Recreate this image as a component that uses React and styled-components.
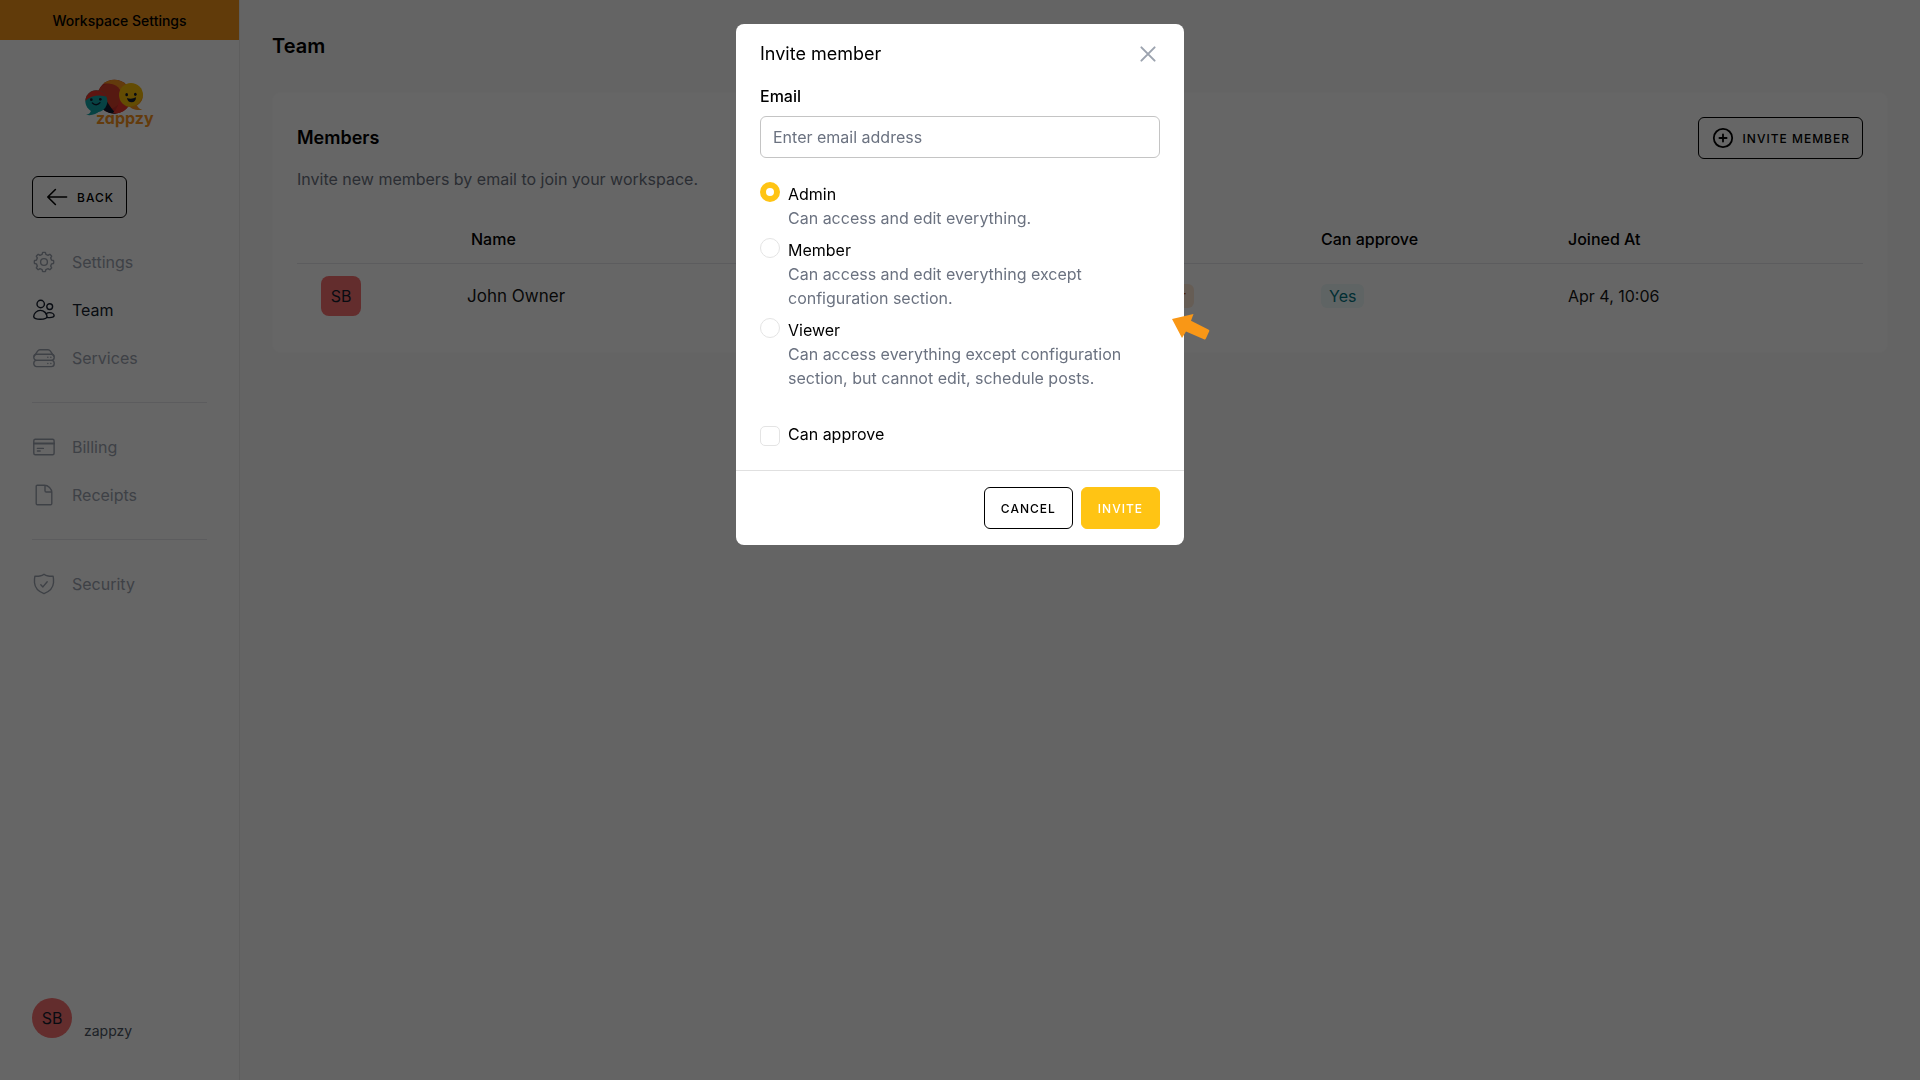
import styled, { createGlobalStyle, css } from 'styled-components'

const GlobalStyle = createGlobalStyle`
    * {
        box-sizing: border-box;
    }
    body {
        margin: 0;
        background: #fbfbfb;
        color: #000;
        font-family: Inter, "Liberation Sans", sans-serif;
        font-size: 16px;
        line-height: 24px;
    }
    h1, h2, h3, p {
        margin: 0;
    }
    button, input {
        font-family: inherit;
    }
`

// eight rounded teeth around the centre of a 24px box
const gearPath = () => {
    const point = (deg, r) => {
        const a = (deg * Math.PI) / 180;
        return `${(12 + r * Math.sin(a)).toFixed(2)} ${(12 - r * Math.cos(a)).toFixed(2)}`;
    };
    const points = [];
    for (let i = 0; i < 8; i++) {
        const c = i * 45;
        points.push(point(c - 14, 7.8), point(c - 9, 9.4), point(c - 6, 9.7), point(c + 6, 9.7), point(c + 9, 9.4), point(c + 14, 7.8));
    }
    return `M${points.join('L')}Z`;
};

const icons = {
    settings: (
        <>
            <path d={gearPath()} />
            <circle cx="12" cy="12" r="3.4" />
        </>
    ),
    team: (
        <>
            <circle cx="8.7" cy="6" r="3.7" />
            <circle cx="17.7" cy="8.6" r="2.9" />
            <path d="M8.3 12.4c3.8 0 6.7 3.2 6.7 6.2 0 2-3 2.7-6.7 2.7s-6.6-.7-6.6-2.7c0-3 2.9-6.2 6.6-6.2Z" />
            <path d="M14 15.9c.9-.8 2.2-1.3 3.5-1.3 2.6 0 4.6 1.5 4.6 3 0 1.3-1.6 2-4.4 2-1.1 0-2 0-2.8-.2" />
        </>
    ),
    services: (
        <>
            <path d="M2.2 10.2 5.6 5.1C6.2 4.2 7 3.7 8 3.7h8c1 0 1.8.5 2.4 1.4l3.4 5.1" />
            <rect x="1.8" y="8.2" width="20.4" height="6.2" rx="2.8" />
            <rect x="1.8" y="14.4" width="20.4" height="6.2" rx="2.8" />
            <path d="M15.8 11.3h.1M18.8 11.3h.1M15.8 17.5h.1M18.8 17.5h.1" />
        </>
    ),
    billing: (
        <>
            <rect x="1.8" y="4.2" width="20.3" height="15.5" rx="1.5" />
            <path d="M2 8.6h20" strokeWidth="2" />
            <path d="M5.4 13.4h6M5.4 16h2.8" />
        </>
    ),
    receipts: (
        <>
            <path d="M5.2 2.3h7.2c3.8 0 7.4 3.5 7.4 7.2v11a1.2 1.2 0 0 1-1.2 1.2H5.4a1.2 1.2 0 0 1-1.2-1.2V3.3a1 1 0 0 1 1-1Z" />
            <path d="M13 2.6v5.2c0 .7.5 1.2 1.2 1.2h5.3" />
        </>
    ),
    security: (
        <>
            <path d="M12 2.2c1.2 1 2.6 1.5 4.2 1.8 1.7.3 3.4.3 4.9.1.4 1.8.6 4.3.4 6.7-.4 5-4 8.8-9.5 10.9-5.5-2.1-9.1-5.9-9.5-10.9-.2-2.4 0-4.9.4-6.7 1.5.2 3.2.2 4.9-.1 1.6-.3 3-.8 4.2-1.8Z" />
            <path d="m8.8 12.8 2.1 2.1 4.3-5.2" />
        </>
    ),
    back: <path d="M21.6 12H3M10.4 4.5 2.8 12l7.6 7.5" />,
    plus: (
        <>
            <circle cx="12" cy="12" r="9.2" />
            <path d="M12 8.4v7.2M8.4 12h7.2" />
        </>
    ),
    close: <path d="m5.4 5.4 13.2 13.2M18.6 5.4 5.4 18.6" />,
};

const Icon = ({ name, stroke = 1.4 }) => (
    <svg width="24" height="24" viewBox="0 0 24 24" fill="none" stroke="currentColor"
        strokeWidth={stroke} strokeLinecap="round" strokeLinejoin="round" aria-hidden="true">
        {icons[name]}
    </svg>
);

const Logo = () => (
    <LogoSvg width="72" height="52" viewBox="250 234 216 156" role="img" aria-label="zappzy">
        <defs>
            <clipPath id="bigBubble"><circle cx="341" cy="290" r="51" /></clipPath>
            <clipPath id="tealBubble"><circle cx="287" cy="304" r="33" /></clipPath>
            <clipPath id="yellowBubble"><circle cx="391" cy="285" r="36" /></clipPath>
        </defs>
        <g clipPath="url(#bigBubble)">
            <rect x="290" y="235" width="105" height="110" fill="#c9302b" />
            <path d="M288 262c14-14 44-18 60 4 12 18 10 40 14 62l40-10v-84h-110Z" fill="#f7931e" />
            <circle cx="326" cy="288" r="37" fill="#d8402b" />
            <path d="M290 275c26 12 34 48 60 68h-60Z" fill="#0f1a2e" />
            <path d="M355 285c6 16 16 26 34 32l-30 30-22-8c14-14 20-32 18-54Z" fill="#e8352c" />
        </g>
        <path d="M382 316c8 9 20 16 43 14-10-4-16-10-18-19Z" fill="#f7931e" />
        <circle cx="391" cy="285" r="36" fill="#f8bd08" />
        <path d="M427 285a36 36 0 0 1-42 36c24-2 36-14 42-36Z" fill="#f7931e" clipPath="url(#yellowBubble)" />
        <path d="M271 330c0 8-6 13-15 14 14 4 32-1 40-10Z" fill="#12a5a8" />
        <g clipPath="url(#tealBubble)">
            <rect x="250" y="268" width="72" height="72" fill="#12a5a8" />
            <path d="M250 268h72v24c-22-10-50-8-72 14Z" fill="#e8352c" />
        </g>
        <g fill="#0f1a2e">
            <ellipse cx="378" cy="284" rx="4" ry="5" />
            <ellipse cx="404" cy="283" rx="4" ry="5" />
            <path d="M379 294c8 3 18 3 27-2 0 10-5 15-13 15s-13-5-14-13Z" />
            <circle cx="272" cy="299" r="4" />
            <circle cx="299" cy="298" r="4" />
        </g>
        <path d="M275 309c8 7 16 7 23-1" fill="none" stroke="#0f1a2e" strokeWidth="4" strokeLinecap="round" />
        <LogoText x="286" y="371">zappzy</LogoText>
    </LogoSvg>
);

const navGroups = [
    [
        { icon: 'settings', label: 'Settings' },
        { icon: 'team', label: 'Team', active: true },
        { icon: 'services', label: 'Services' },
    ],
    [
        { icon: 'billing', label: 'Billing' },
        { icon: 'receipts', label: 'Receipts' },
    ],
    [
        { icon: 'security', label: 'Security' },
    ],
];

const roles = [
    { id: 'admin', label: 'Admin', text: 'Can access and edit everything.' },
    { id: 'member', label: 'Member', text: 'Can access and edit everything except configuration section.' },
    { id: 'viewer', label: 'Viewer', text: 'Can access everything except configuration section, but cannot edit, schedule posts.' },
];

const Sidebar = () => (
    <Aside>
        <Banner>Workspace Settings</Banner>
        <Logo />
        <SideBody>
            <OutlineButton type="button" $withIcon>
                <Icon name="back" stroke={1.6} />
                Back
            </OutlineButton>
            <Nav>
                {navGroups.map((group, i) => (
                    <NavGroup key={i}>
                        {group.map((item) => (
                            <NavLink key={item.label} href="#" $active={item.active}>
                                <Icon name={item.icon} />
                                {item.label}
                            </NavLink>
                        ))}
                    </NavGroup>
                ))}
            </Nav>
            <Account>
                <Avatar $round>SB</Avatar>
                <AccountName>zappzy</AccountName>
            </Account>
        </SideBody>
    </Aside>
);

const Members = () => (
    <Card>
        <CardHeader>
            <CardTitle>Members</CardTitle>
            <OutlineButton type="button" $withIcon>
                <Icon name="plus" stroke={1.8} />
                Invite member
            </OutlineButton>
        </CardHeader>
        <CardText>Invite new members by email to join your workspace.</CardText>
        <Table>
            <thead>
                <tr>
                    <Th $width="150px" />
                    <Th>Name</Th>
                    <Th $width="193px">Role</Th>
                    <Th $width="247px">Can approve</Th>
                    <Th $width="319px">Joined At</Th>
                </tr>
            </thead>
            <tbody>
                <tr>
                    <Td><Avatar>SB</Avatar></Td>
                    <Td $name>John Owner</Td>
                    <Td><Tag $color="#c2570c" $bg="#ffe8d5">Owner</Tag></Td>
                    <Td><Tag $color="#047481" $bg="#edfafa">Yes</Tag></Td>
                    <Td>Apr 4, 10:06</Td>
                </tr>
            </tbody>
        </Table>
    </Card>
);

const InviteModal = () => (
    <Overlay>
        <Modal role="dialog" aria-labelledby="invite-title">
            <ModalHeader>
                <ModalTitle id="invite-title">Invite member</ModalTitle>
                <CloseButton type="button" aria-label="Close">
                    <Icon name="close" stroke={2} />
                </CloseButton>
            </ModalHeader>
            <ModalBody>
                <FieldLabel htmlFor="email">Email</FieldLabel>
                <TextInput id="email" type="email" placeholder="Enter email address" />
                <RoleList>
                    {roles.map((role) => (
                        <Option key={role.id}>
                            <Radio type="radio" name="role" id={role.id} defaultChecked={role.id === 'admin'} />
                            <div>
                                <OptionLabel htmlFor={role.id}>{role.label}</OptionLabel>
                                <OptionText>{role.text}</OptionText>
                            </div>
                        </Option>
                    ))}
                </RoleList>
                <Option $end>
                    <Checkbox type="checkbox" id="approve" />
                    <OptionLabel htmlFor="approve">Can approve</OptionLabel>
                </Option>
            </ModalBody>
            <ModalFooter>
                <OutlineButton type="button">Cancel</OutlineButton>
                <PrimaryButton type="button">Invite</PrimaryButton>
            </ModalFooter>
            <Pointer width="38" height="26" viewBox="0 0 38 26" aria-hidden="true">
                <path d="M0 5 21.5 0 19 6.800l17.300 8.700c1 .5 1.300 1 .8 2l-3.200 7c-.4 1-1 1.200-2 .8L14 17.500 10 24Z" fill="#f99716" />
            </Pointer>
        </Modal>
    </Overlay>
);

const App = () => {
    return (
        <Page>
            <GlobalStyle />
            <Sidebar />
            <Main>
                <PageTitle>Team</PageTitle>
                <Members />
            </Main>
            <InviteModal />
        </Page>
    );
};

const Page = styled.div`
    display: flex;
    min-height: 100vh;
`;

const Aside = styled.aside`
    display: flex;
    flex-direction: column;
    flex: none;
    width: 240px;
    background: #fff;
    border-right: 1px solid #ececec;
`;

const Banner = styled.div`
    height: 40px;
    background: #f39319;
    font-size: 14px;
    font-weight: 500;
    line-height: 42px;
    text-align: center;
`;

const LogoSvg = styled.svg`
    margin: 38px auto 46px;
    flex: none;
`;

const LogoText = styled.text`
    font-size: 48px;
    font-weight: 700;
    font-feature-settings: "cv11";
    fill: #f7931e;
`;

const SideBody = styled.div`
    display: flex;
    flex: 1;
    flex-direction: column;
    align-items: flex-start;
    padding: 0 32px 42px;
`;

const buttonBase = css`
    display: inline-flex;
    align-items: center;
    gap: 8px;
    height: 42px;
    padding: 0 16px;
    border: 1px solid #000;
    border-radius: 6px;
    font-size: 12px;
    font-weight: 500;
    letter-spacing: 1px;
    text-transform: uppercase;
    white-space: nowrap;
    cursor: pointer;
`;

const OutlineButton = styled.button`
    ${buttonBase}
    padding: 0 ${(props) => (props.$withIcon ? '12px' : '16px')};
    background: #fff;
    color: #000;
`;

const PrimaryButton = styled.button`
    ${buttonBase}
    border-color: #ffc414;
    background: #ffc414;
    color: #fff;
`;

const Nav = styled.nav`
    width: 100%;
    margin-top: 20px;
`;

const NavGroup = styled.div`
    & + & {
        margin-top: 20px;
        padding-top: 20px;
        border-top: 1px solid #e5e7eb;
    }
`;

const NavLink = styled.a`
    display: flex;
    align-items: center;
    gap: 16px;
    height: 48px;
    color: ${(props) => (props.$active ? '#161e2e' : '#9ca3af')};
    text-decoration: none;
`;

const Account = styled.div`
    display: flex;
    align-items: flex-end;
    gap: 12px;
    margin-top: auto;
`;

const AccountName = styled.span`
    color: #4b5563;
    font-size: 14px;
    line-height: 14px;
`;

const Avatar = styled.div`
    display: flex;
    align-items: center;
    justify-content: center;
    width: 40px;
    height: 40px;
    border-radius: ${(props) => (props.$round ? '50%' : '8px')};
    background: #f87171;
    color: #161e2e;
`;

const Main = styled.main`
    flex: 1;
    padding: 32px;
`;

const PageTitle = styled.h1`
    margin-bottom: 32px;
    font-size: 20px;
    font-weight: 600;
    line-height: 28px;
`;

const Card = styled.section`
    padding: 24px;
    border: 1px solid #fdfdfd;
    border-radius: 8px;
    background: #fff;
`;

const CardHeader = styled.header`
    display: flex;
    align-items: center;
    justify-content: space-between;
`;

const CardTitle = styled.h2`
    font-size: 18px;
    font-weight: 600;
    line-height: 28px;
`;

const CardText = styled.p`
    margin: 8px 0 24px;
    color: #6b7280;
`;

const Table = styled.table`
    width: 100%;
    table-layout: fixed;
    border-spacing: 0;
    text-align: left;
`;

const Th = styled.th`
    width: ${(props) => props.$width || 'auto'};
    height: 49px;
    padding: 0 24px;
    border-bottom: 1px solid #e5e7eb;
    font-weight: 500;
`;

const Td = styled.td`
    height: 64px;
    padding: 0 24px 0 ${(props) => (props.$name ? '20px' : '24px')};
    color: #161616;
    font-size: ${(props) => (props.$name ? '17px' : '16px')};
`;

const Tag = styled.span`
    display: inline-block;
    padding: 0 8px;
    border-radius: 6px;
    background: ${(props) => props.$bg};
    color: ${(props) => props.$color};
`;

const Overlay = styled.div`
    position: fixed;
    inset: 0;
    display: flex;
    align-items: flex-start;
    justify-content: center;
    padding-top: 24px;
    background: rgba(0, 0, 0, 0.6);
`;

const Modal = styled.div`
    position: relative;
    width: 448px;
    border-radius: 8px;
    background: #fff;
`;

const ModalHeader = styled.header`
    display: flex;
    align-items: center;
    justify-content: space-between;
    padding: 16px 24px;
`;

const ModalTitle = styled.h3`
    font-size: 18px;
    font-weight: 400;
    line-height: 28px;
`;

const CloseButton = styled.button`
    display: flex;
    padding: 0;
    border: none;
    background: none;
    color: #9ca3af;
    cursor: pointer;
`;

const ModalBody = styled.div`
    padding: 0 24px 24px;
`;

const FieldLabel = styled.label`
    display: block;
    margin-bottom: 8px;
    font-weight: 500;
`;

const TextInput = styled.input`
    display: block;
    width: 100%;
    height: 42px;
    padding: 0 12px;
    border: 1px solid #c4c4c4;
    border-radius: 6px;
    font-size: 16px;

    &::placeholder {
        color: #6b7280;
    }
`;

const RoleList = styled.div`
    display: flex;
    flex-direction: column;
    gap: 8px;
    margin: 24px 0 32px;
`;

const Option = styled.div`
    display: flex;
    align-items: ${(props) => (props.$end ? 'flex-end' : 'flex-start')};
    gap: 8px;
`;

const tick = css`
    appearance: none;
    flex: none;
    width: 20px;
    height: 20px;
    margin: 0;
    border: 1px solid #e4e4e4;
    background: #fff;
`;

const Radio = styled.input`
    ${tick}
    border-radius: 50%;

    &:checked {
        border: 6px solid #ffc414;
    }
`;

const Checkbox = styled.input`
    ${tick}
    border-radius: 5px;
`;

const OptionLabel = styled.label`
    display: block;
`;

const OptionText = styled.p`
    color: #6b7280;
`;

const ModalFooter = styled.footer`
    display: flex;
    justify-content: flex-end;
    gap: 8px;
    padding: 16px 24px;
    border-top: 1px solid #e0e0e0;
`;

// sits on the modal's right edge
const Pointer = styled.svg`
    position: absolute;
    top: 290px;
    right: -26px;
`;

export default App;
